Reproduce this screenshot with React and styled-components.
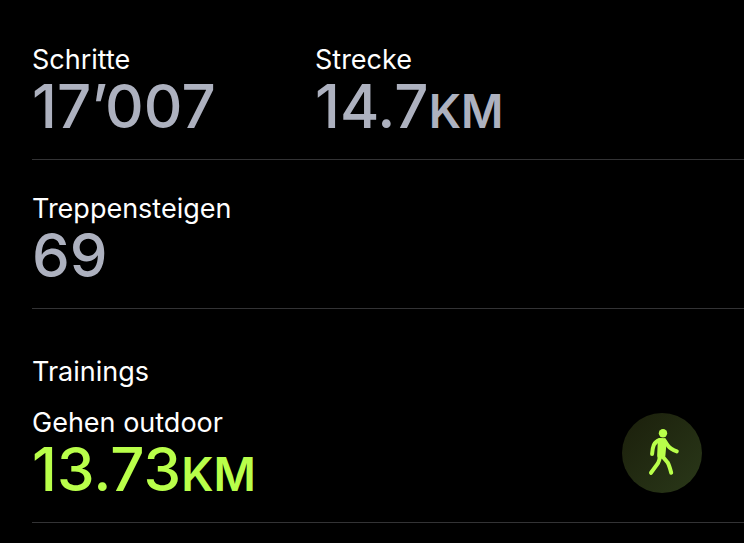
import React from 'react';
import styled, { createGlobalStyle } from 'styled-components';

// --- Styled Components ---
const GlobalStyle = createGlobalStyle`
  * {
    box-sizing: border-box;
  }

  body {
    margin: 0;
    background-color: #000;
    color: #fff;
    font-family: Inter, 'Liberation Sans', sans-serif;
  }
`;

const Page = styled.main`
  min-height: 100vh;
  padding: 11px 0 20px 32px;
`;

const Section = styled.section`
  display: grid;
  grid-template-columns: ${({ $columns }) => $columns || '1fr'};
  align-items: center;
  padding: 33px 0 23px;
  border-bottom: 1px solid #333335;
`;

const TrainingsTitle = styled.h2`
  margin: 0;
  padding-top: 47px;
  font-size: 27px;
  font-weight: 400;
  line-height: 32px;
`;

const TrainingRow = styled(Section)`
  padding: 19px 42px 23px 0;
`;

const Metric = styled.div`
  min-width: 0;
`;

const Label = styled.div`
  font-size: 27px;
  line-height: 32px;
`;

const Value = styled.div`
  font-size: 60px;
  font-weight: 500;
  line-height: 60px;
  white-space: nowrap;
  color: ${({ $color }) => $color || '#adb1bf'};
`;

const Unit = styled.span`
  font-size: 46px;
  font-weight: 600;
  line-height: 46px;
`;

const ActivityBadge = styled.div`
  width: 80px;
  height: 80px;
  border-radius: 50%;
  background: linear-gradient(135deg, #1b1f0b, #2a3819);
`;

// --- Components ---

const Stat = ({ label, value, unit, color }) => (
  <Metric>
    <Label>{label}</Label>
    <Value $color={color}>
      {value}
      {unit && <Unit>{unit}</Unit>}
    </Value>
  </Metric>
);

const WalkIcon = () => (
  <svg width="80" height="80" viewBox="0 0 80 80" fill="none" aria-hidden="true">
    <circle cx="41" cy="20.2" r="4.2" fill="#b9ff4a" />
    <path
      d="M36 25.8Q39.6 24.4 43.6 25.6L44.6 29L43.4 42.6Q43 45.8 39.6 45.8Q35 45.6 35.2 41.8L35.8 28Z"
      fill="#b9ff4a"
    />
    <g stroke="#b9ff4a" strokeWidth="4" strokeLinecap="round" strokeLinejoin="round">
      <path d="M37.8 27Q33.4 28.6 31.9 31.8Q30.4 35.3 30.1 41" />
      <path d="M42.4 27.4L46.2 33Q48.6 36 54.8 38.4" />
      <path d="M37.6 42.5Q38 47 36 50.2Q34.5 52.4 29 59.8" />
      <path d="M40.6 43.5L45.4 49.2Q47.2 52 49.2 59.8" />
    </g>
  </svg>
);

const App = () => (
  <>
    <GlobalStyle />
    <Page>
      <Section $columns="283px 1fr">
        <Stat label="Schritte" value="17’007" />
        <Stat label="Strecke" value="14.7" unit="KM" />
      </Section>
      <Section>
        <Stat label="Treppensteigen" value="69" />
      </Section>
      <TrainingsTitle>Trainings</TrainingsTitle>
      <TrainingRow $columns="1fr auto">
        <Stat label="Gehen outdoor" value="13.73" unit="KM" color="#b9ff4a" />
        <ActivityBadge>
          <WalkIcon />
        </ActivityBadge>
      </TrainingRow>
    </Page>
  </>
);

export default App;
